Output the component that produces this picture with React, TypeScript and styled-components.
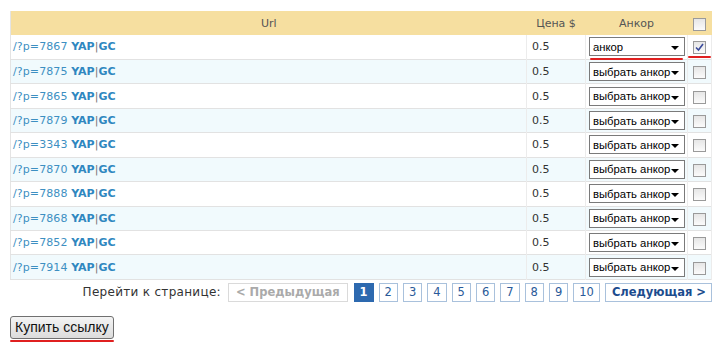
import * as React from 'react';
import styled, { createGlobalStyle, css } from 'styled-components';

// =========================
// Data
// =========================

const rows = [
    { id: '7867', anchor: 'анкор', checked: true },
    { id: '7875', anchor: 'выбрать анкор', checked: false },
    { id: '7865', anchor: 'выбрать анкор', checked: false },
    { id: '7879', anchor: 'выбрать анкор', checked: false },
    { id: '3343', anchor: 'выбрать анкор', checked: false },
    { id: '7870', anchor: 'выбрать анкор', checked: false },
    { id: '7888', anchor: 'выбрать анкор', checked: false },
    { id: '7868', anchor: 'выбрать анкор', checked: false },
    { id: '7852', anchor: 'выбрать анкор', checked: false },
    { id: '7914', anchor: 'выбрать анкор', checked: false },
];

const pages = [1, 2, 3, 4, 5, 6, 7, 8, 9, 10];

// =========================
// Styled components
// =========================

const GlobalStyle = createGlobalStyle`
  html, body {
    margin: 0;
    padding: 0;
    background: #fff;
  }
  body {
    font-family: "DejaVu Sans", Verdana, sans-serif;
    font-size: 11px;
    color: #333;
  }
`;

const Page = styled.div`
  width: 720px;
  padding: 11px 8px 0 10px;
  box-sizing: border-box;
`;

const Table = styled.table`
  width: 702px;
  border-collapse: collapse;
  table-layout: fixed;
  border-left: 1px solid #e4e4e4;
`;

const HeadCell = styled.th<{ $w?: number }>`
  height: 24px;
  padding: 0;
  background: #f6dfa0;
  color: #555;
  font-weight: normal;
  font-size: 11px;
  text-align: center;
  ${({ $w }) => $w && css`width: ${$w}px;`}
`;

const Row = styled.tr<{ $alt: boolean }>`
  height: 24.45px;
  background: ${({ $alt }) => ($alt ? '#f1fafd' : '#fff')};
  border-bottom: 1px solid #e2e2e2;
`;

const Cell = styled.td<{ $center?: boolean }>`
  padding: 0 0 0 2px;
  border-right: 1px solid #ececec;
  white-space: nowrap;
  vertical-align: middle;
  ${({ $center }) => $center && css`
    text-align: center;
    padding: 0;
  `}
`;

const Link = styled.span`
  color: #3d8fc2;
  letter-spacing: 0.1px;
`;

const Strong = styled.b`
  color: #2f87c0;
`;

const Pipe = styled.span`
  color: #777;
`;

const Price = styled.span`
  padding-left: 3px;
  color: #333;
`;

const Marked = styled.div<{ $mark: boolean; $inset?: number }>`
  position: relative;
  display: inline-flex;
  vertical-align: middle;
  ${({ $mark, $inset = 2 }) => $mark && css`
    &::after {
      content: '';
      position: absolute;
      left: ${$inset}px;
      right: ${$inset}px;
      bottom: -4px;
      height: 2px;
      border-radius: 1px;
      background: #e02020;
    }
  `}
`;

const SelectBox = styled.div`
  display: flex;
  align-items: center;
  justify-content: space-between;
  width: 96px;
  height: 19px;
  margin-left: 1px;
  padding: 0 5px 0 3px;
  box-sizing: border-box;
  border: 1px solid #7a7a7a;
  background: #fff;
  font-family: "Liberation Sans", Arial, sans-serif;
  font-size: 11.3px;
  color: #000;
`;

const Arrow = styled.span`
  flex: none;
  width: 0;
  height: 0;
  margin-top: 3px;
  border-left: 4px solid transparent;
  border-right: 4px solid transparent;
  border-top: 4px solid #000;
`;

const Check = styled.span`
  display: inline-flex;
  align-items: center;
  justify-content: center;
  width: 11px;
  height: 11px;
  margin-top: 2px;
  border: 1px solid #9a9a9a;
  background: linear-gradient(#e6e6e6, #fbfbfb);
  vertical-align: middle;
`;

const Pager = styled.div`
  display: flex;
  justify-content: flex-end;
  align-items: center;
  gap: 5px;
  margin-top: 3px;
  width: 702px;
`;

const PagerLabel = styled.span`
  font-size: 12px;
  letter-spacing: 0.3px;
  color: #333;
  margin-right: 2px;
`;

const PageButton = styled.span<{ $active?: boolean; $kind?: 'prev' | 'next' }>`
  display: inline-flex;
  align-items: center;
  justify-content: center;
  box-sizing: border-box;
  min-width: 19px;
  height: 19px;
  padding: 0 6px;
  border: 1px solid #a9c1dc;
  color: #2a5a99;
  font-size: 11.5px;
  ${({ $active }) => $active && css`
    background: #2d69af;
    border-color: #2d69af;
    color: #fff;
    font-weight: bold;
  `}
  ${({ $kind }) => $kind === 'prev' && css`
    padding: 0 7px;
    border-color: #dadada;
    color: #aaa;
    font-weight: bold;
    margin-right: 1px;
  `}
  ${({ $kind }) => $kind === 'next' && css`
    padding: 0 5px 0 6px;
    color: #1c4c8e;
    font-weight: bold;
  `}
`;

const PageNumber = styled(PageButton)`
  padding: 0 5px;
`;

const BuyArea = styled.div`
  display: inline-flex;
  flex-direction: column;
  gap: 1px;
  margin-top: 14px;
`;

const BuyButton = styled.button`
  height: 23px;
  padding: 0 4px;
  border: 1px solid #707070;
  border-radius: 3px;
  background: linear-gradient(#f4f4f4, #dcdcdc);
  font-family: "Liberation Sans", Arial, sans-serif;
  font-size: 14px;
  color: #111;
  cursor: pointer;
`;

const Underline = styled.div`
  height: 2px;
  border-radius: 1px;
  background: #e02020;
`;

// =========================
// Component
// =========================

export default function App() {
    return (
        <Page>
            <GlobalStyle />
            <Table>
                <thead>
                    <tr>
                        <HeadCell>Url</HeadCell>
                        <HeadCell $w={59}>Цена $</HeadCell>
                        <HeadCell $w={102}>Анкор</HeadCell>
                        <HeadCell $w={24}><Check /></HeadCell>
                    </tr>
                </thead>
                <tbody>
                    {rows.map((r, i) => (
                        <Row key={r.id} $alt={i % 2 === 1}>
                            <Cell>
                                <Link>/?p={r.id} </Link>
                                <Strong>YAP</Strong><Pipe>|</Pipe><Strong>GC</Strong>
                            </Cell>
                            <Cell><Price>0.5</Price></Cell>
                            <Cell>
                                <Marked $mark={r.checked}>
                                    <SelectBox>
                                        <span>{r.anchor}</span>
                                        <Arrow />
                                    </SelectBox>
                                </Marked>
                            </Cell>
                            <Cell $center>
                                <Marked $mark={r.checked} $inset={-5}>
                                    <Check>
                                        {r.checked && (
                                            <svg width="9" height="9" viewBox="0 0 9 9">
                                                <path d="M1 4.5 L3.5 7 L8 1" fill="none" stroke="#3a4a9a" strokeWidth="1.6" />
                                            </svg>
                                        )}
                                    </Check>
                                </Marked>
                            </Cell>
                        </Row>
                    ))}
                </tbody>
            </Table>
            <Pager>
                <PagerLabel>Перейти к странице:</PagerLabel>
                <PageButton $kind="prev">&lt; Предыдущая</PageButton>
                {pages.map((p) => (
                    <PageNumber key={p} $active={p === 1}>{p}</PageNumber>
                ))}
                <PageButton $kind="next">Следующая &gt;</PageButton>
            </Pager>
            <BuyArea>
                <BuyButton>Купить ссылку</BuyButton>
                <Underline />
            </BuyArea>
        </Page>
    );
}
